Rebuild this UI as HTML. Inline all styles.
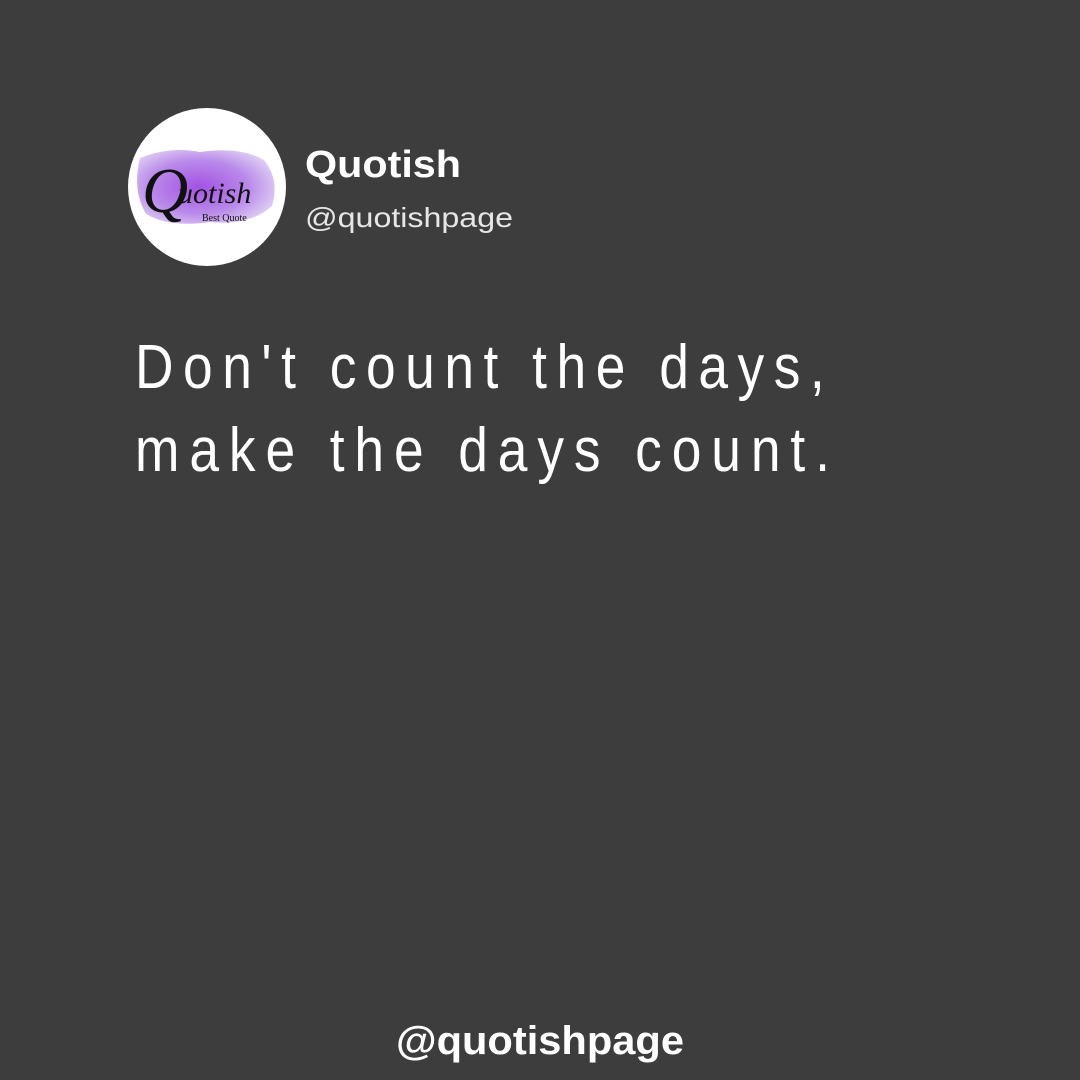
<!DOCTYPE html>
<html><head><meta charset="utf-8"><style>
html,body{margin:0;padding:0;background:#3d3d3d;}
body{width:1080px;height:1080px;position:relative;overflow:hidden;font-family:"Liberation Sans",sans-serif;}
</style></head><body>
<svg width="1080" height="1080" viewBox="0 0 1080 1080" style="position:absolute;left:0;top:0">
<defs>
<radialGradient id="g" cx="0.45" cy="0.5" r="0.6">
<stop offset="0" stop-color="#9a3fe0"/><stop offset="0.6" stop-color="#b27de8"/><stop offset="1" stop-color="#dccbf2"/>
</radialGradient>
</defs>
<circle cx="207" cy="187" r="79" fill="#fff"/>
<path d="M140 158 Q170 146 200 152 Q240 146 264 160 Q280 180 272 206 Q250 226 210 222 Q170 228 146 214 Q132 190 140 158Z" fill="url(#g)" opacity="0.9"/>
<text x="142" y="212" font-family="Liberation Serif,serif" font-style="italic" font-size="64" fill="#111">Q</text>
<text x="178" y="203" font-family="Liberation Serif,serif" font-style="italic" font-size="30" fill="#111">uotish</text>
<text x="202" y="221" font-family="Liberation Serif,serif" font-size="10" fill="#111">Best Quote</text>
<text x="305" y="177" font-size="38" font-weight="bold" fill="#fff" textLength="156" lengthAdjust="spacingAndGlyphs">Quotish</text>
<text x="305" y="227" font-size="28" fill="#e6e6e6" textLength="208" lengthAdjust="spacingAndGlyphs">@quotishpage</text>
<g transform="scale(0.86,1)">
<text x="157" y="388" font-size="62" fill="#fff" textLength="802" lengthAdjust="spacing">Don't count the days,</text>
<text x="157" y="471" font-size="62" fill="#fff" textLength="808" lengthAdjust="spacing">make the days count.</text>
</g>
<text x="396" y="1054" font-size="40" font-weight="bold" fill="#fff" textLength="288" lengthAdjust="spacingAndGlyphs">@quotishpage</text>
</svg>
</body></html>
